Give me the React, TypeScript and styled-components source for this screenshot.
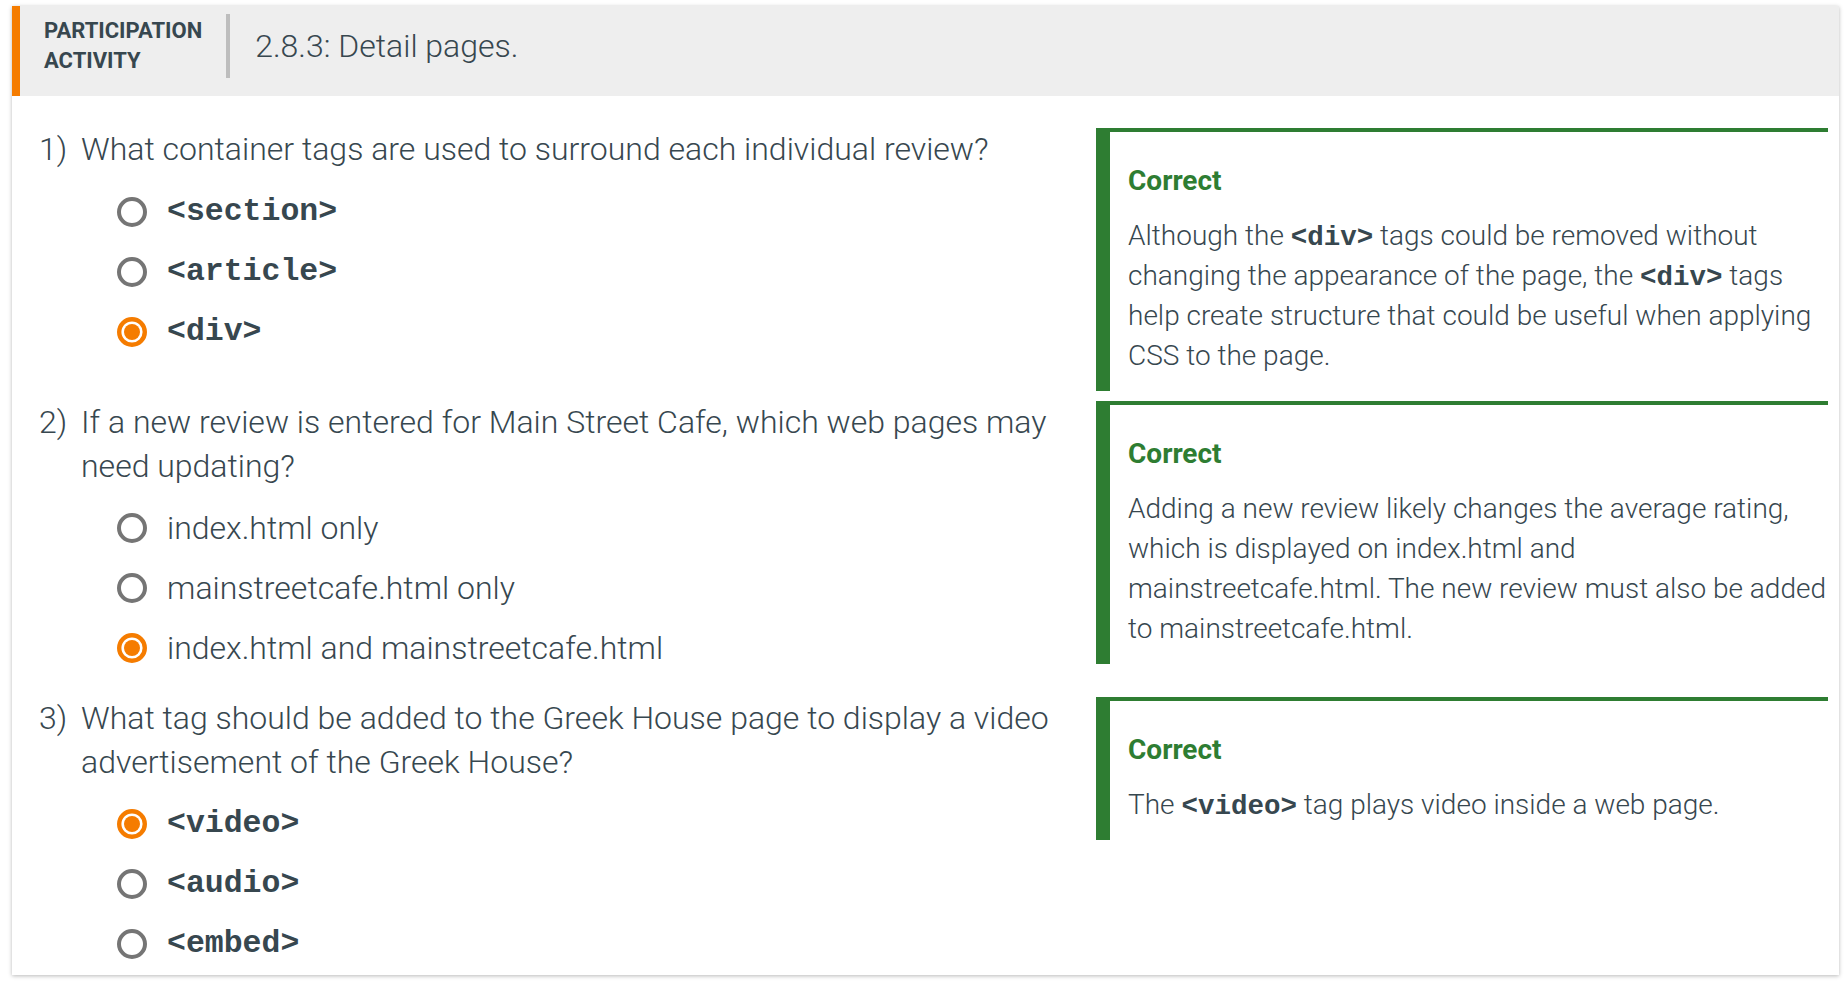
import React from "react";
import styled, { createGlobalStyle } from "styled-components";

const GlobalStyle = createGlobalStyle`
  html, body { margin: 0; padding: 0; background: #ffffff; }
  body { font-family: Roboto, "Liberation Sans", Arial, sans-serif; color: #37474f; }
  * { box-sizing: border-box; }
`;

const lightFont = `"Roboto Light", Roboto, "Liberation Sans", Arial, sans-serif`;

const Page = styled.div`
  padding: 6px 9px 8px 12px;
`;

const Card = styled.section`
  width: 1827px;
  background: #ffffff;
  box-shadow: 0 1px 4px rgba(0, 0, 0, 0.28);
`;

const Header = styled.header`
  display: flex;
  align-items: center;
  height: 90px;
  padding: 8px 0 18px 0;
  background: #eeeeee;
  border-left: 8px solid #f57c00;
`;

const TypeLabel = styled.div`
  margin-left: 24px;
  font-size: 22px;
  line-height: 30px;
  font-weight: 700;
  color: #37474f;
`;

const Divider = styled.div`
  width: 4px;
  height: 64px;
  background: #bdbdbd;
  margin: 0 25px 0 24px;
`;

const Title = styled.h2`
  margin: 0;
  font-family: ${lightFont};
  font-size: 32px;
  line-height: 40px;
  font-weight: 300;
  color: #37474f;
`;

const Body = styled.div`
  padding: 32px 11px 0 27px;
`;

const Row = styled.div`
  display: flex;
  align-items: flex-start;
`;

const Left = styled.div<{ $last?: boolean }>`
  flex: 1;
  display: flex;
  padding: 0 20px ${(p) => (p.$last ? "1px" : "19px")} 0;
`;

const Num = styled.div`
  width: 42px;
  flex: none;
  font-family: ${lightFont};
  font-size: 32px;
  line-height: 43.5px;
  font-weight: 300;
`;

const QBody = styled.div`
  flex: 1;
`;

const QText = styled.div`
  font-family: ${lightFont};
  font-size: 32px;
  line-height: 43.5px;
  font-weight: 300;
`;

const Options = styled.div`
  margin-top: 10px;
  display: flex;
  flex-direction: column;
`;

const Option = styled.label`
  display: flex;
  align-items: center;
  gap: 20px;
  height: 60px;
  padding-left: 36px;
  font-family: ${lightFont};
  font-size: 32px;
  font-weight: 300;
  color: #37474f;
`;

const Code = styled.code<{ $size?: number }>`
  font-family: "Liberation Mono", "Courier New", monospace;
  font-weight: 700;
  font-size: ${(p) => p.$size ?? 31.5}px;
  line-height: 1;
  color: #37474f;
`;

const Feedback = styled.div`
  width: 732px;
  flex: none;
  margin-bottom: 10px;
  border-top: 4px solid #2e7d32;
  border-left: 14px solid #2e7d32;
  padding: 29px 0 15px 18px;
`;

const FbTitle = styled.div`
  font-size: 28px;
  line-height: 40px;
  font-weight: 700;
  color: #2e7d32;
  margin-bottom: 15px;
`;

const FbText = styled.div`
  font-family: ${lightFont};
  font-size: 28px;
  line-height: 40px;
  font-weight: 300;
  color: #37474f;
`;

const Radio = ({ checked }: { checked?: boolean }) => (
  <svg width="30" height="30" viewBox="0 0 30 30" style={{ flex: "none" }}>
    {checked ? (
      <>
        <circle cx="15" cy="15" r="12.8" fill="none" stroke="#f57c00" strokeWidth="4.4" />
        <circle cx="15" cy="15" r="8" fill="#f57c00" />
      </>
    ) : (
      <circle cx="15" cy="15" r="13" fill="none" stroke="#757575" strokeWidth="4" />
    )}
  </svg>
);

type Opt = { text: string; code?: boolean; checked?: boolean };
type Q = { n: number; text: string; options: Opt[]; feedback: React.ReactNode };

const questions: Q[] = [
  {
    n: 1,
    text: "What container tags are used to surround each individual review?",
    options: [
      { text: "<section>", code: true },
      { text: "<article>", code: true },
      { text: "<div>", code: true, checked: true },
    ],
    feedback: (
      <>
        Although the <Code $size={27.5}>&lt;div&gt;</Code> tags could be removed without changing the
        appearance of the page, the <Code $size={27.5}>&lt;div&gt;</Code> tags help create structure
        that could be useful when applying CSS to the page.
      </>
    ),
  },
  {
    n: 2,
    text: "If a new review is entered for Main Street Cafe, which web pages may need updating?",
    options: [
      { text: "index.html only" },
      { text: "mainstreetcafe.html only" },
      { text: "index.html and mainstreetcafe.html", checked: true },
    ],
    feedback: (
      <>
        Adding a new review likely changes the average rating, which is displayed on index.html and
        mainstreetcafe.html. The new review must also be added to mainstreetcafe.html.
      </>
    ),
  },
  {
    n: 3,
    text: "What tag should be added to the Greek House page to display a video advertisement of the Greek House?",
    options: [
      { text: "<video>", code: true, checked: true },
      { text: "<audio>", code: true },
      { text: "<embed>", code: true },
    ],
    feedback: (
      <>
        The <Code $size={27.5}>&lt;video&gt;</Code> tag plays video inside a web page.
      </>
    ),
  },
];

export default function App() {
  return (
    <>
      <GlobalStyle />
      <Page>
        <Card>
          <Header>
            <TypeLabel>
              PARTICIPATION
              <br />
              ACTIVITY
            </TypeLabel>
            <Divider />
            <Title>2.8.3: Detail pages.</Title>
          </Header>
          <Body>
            {questions.map((q, i) => (
              <Row key={q.n}>
                <Left $last={i === questions.length - 1}>
                  <Num>{q.n})</Num>
                  <QBody>
                    <QText>{q.text}</QText>
                    <Options>
                      {q.options.map((o) => (
                        <Option key={o.text}>
                          <Radio checked={o.checked} />
                          {o.code ? <Code>{o.text}</Code> : <span>{o.text}</span>}
                        </Option>
                      ))}
                    </Options>
                  </QBody>
                </Left>
                <Feedback>
                  <FbTitle>Correct</FbTitle>
                  <FbText>{q.feedback}</FbText>
                </Feedback>
              </Row>
            ))}
          </Body>
        </Card>
      </Page>
    </>
  );
}
